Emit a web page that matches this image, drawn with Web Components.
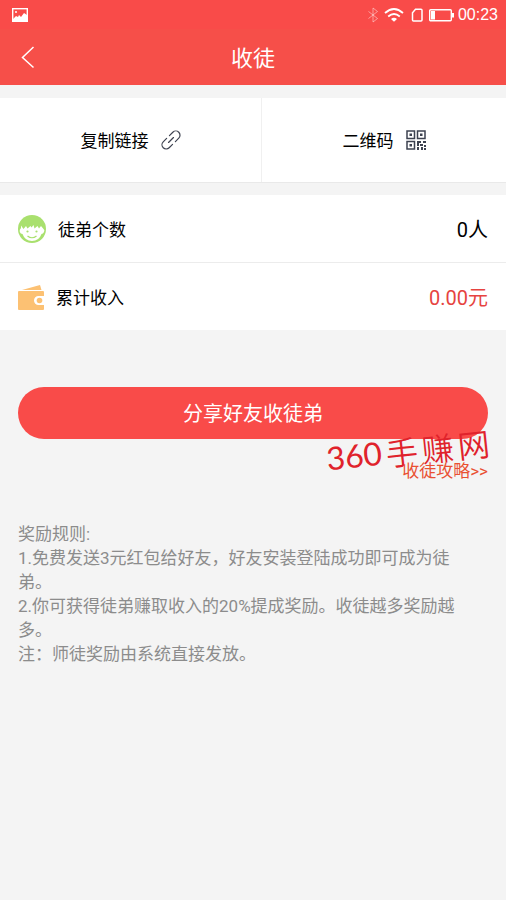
<!DOCTYPE html>
<html lang="zh-CN">
<head>
<meta charset="utf-8">
<meta name="viewport" content="width=device-width, initial-scale=1">
<title>收徒</title>
<style>
html { background: #f4f4f4; }
body { margin: 0; color: #000; font: 17px/24px Roboto, "Noto Sans CJK SC", sans-serif; }
</style>
</head>
<body>
<invite-page></invite-page>
<script>
const define = (name, html) => {
  const template = document.createElement('template');
  template.innerHTML = '<style>*{box-sizing:border-box}:host{display:block;box-sizing:border-box}svg{display:block;flex:none}button{font:inherit;color:inherit;border:0;margin:0;padding:0;background:none;cursor:pointer}</style>' + html;
  customElements.define(name, class extends HTMLElement {
    constructor() {
      super();
      this.attachShadow({ mode: 'open' }).append(template.content.cloneNode(true));
    }
  });
};

define('status-bar', `
<style>
:host { display: flex; align-items: center; justify-content: space-between; height: 29px; padding: 0 8px 0 12px; background: #f94b49; color: #fff; }
.right { display: flex; align-items: center; gap: 4px; }
time { font: 16px/20px "Liberation Sans", sans-serif; }
</style>
<svg width="16" height="14" viewBox="0 0 16 14" aria-hidden="true"><rect x=".7" y=".7" width="14.6" height="12.6" fill="none" stroke="#fff" stroke-width="1.4"/><circle cx="4" cy="4" r="1" fill="#fff"/><path d="M1 13V11L4 8l2 1 1-2 2 2 3-4 3 2v6z" fill="#fff"/></svg>
<div class="right">
<svg width="12" height="16" viewBox="0 0 12 16" fill="none" stroke="#fff" stroke-opacity=".45" aria-hidden="true"><path d="M1.500 4.500l9 7L6 15V1l4.500 3.500-9 7"/></svg>
<svg width="22" height="16" viewBox="0 0 22 16" fill="none" stroke="#fff" stroke-width="1.800" aria-hidden="true"><path d="M2 6q9-8 18 0M5.200 9.500q5.800-5 11.600 0"/><path d="M8 12q3-2.600 6 0l-3 2.800z" fill="#fff" stroke="none"/></svg>
<svg width="16" height="16" viewBox="0 0 16 16" fill="none" stroke="#fff" stroke-width="1.500" aria-hidden="true"><path d="M6.500 2.300H12q1 0 1 1V13q0 1-1 1H4.500q-1 0-1-1V5.800z"/></svg>
<svg width="25" height="14" viewBox="0 0 25 14" aria-hidden="true"><rect x=".7" y="1.700" width="21.600" height="11" rx="1" fill="none" stroke="#fff" stroke-width="1.400"/><path d="M2 3h4v8.400H2zM23 5h2v4.500h-2z" fill="#fff"/></svg>
<time>00:23</time>
</div>`);

define('nav-bar', `
<style>
:host { display: grid; grid-template-columns: 56px 1fr 56px; align-items: center; height: 56px; background: #f64f49; color: #fff; }
button { display: flex; align-items: center; height: 56px; padding-left: 21px; }
h1 { margin: 0; padding-top: 4px; font-size: 22px; line-height: 32px; font-weight: 400; text-align: center; }
</style>
<button type="button" aria-label="返回"><svg width="14" height="24" viewBox="0 0 14 24" fill="none" stroke="#fff" stroke-width="1.500"><path d="M12.500 2L1.500 12.500l11 10"/></svg></button>
<h1><slot></slot></h1>`);

define('action-tile', `
<style>
:host { flex: 1; }
button { display: flex; align-items: center; justify-content: center; gap: 12px; width: 100%; height: 84px; }
span { padding-top: 2px; }
</style>
<button type="button"><span><slot></slot></span><slot name="icon"></slot></button>`);

define('stat-row', `
<style>
:host { display: flex; align-items: center; gap: 12px; height: 67px; padding: 0 18px; background: #fff; }
span { padding-top: 2px; }
.value { margin-left: auto; font-size: 20px; line-height: 28px; color: var(--value-color, #000); }
</style>
<slot name="icon"></slot><span><slot></slot></span><span class="value"><slot name="value"></slot></span>`);

define('share-button', `
<style>
button { display: block; width: 100%; height: 52px; padding-top: 2px; border-radius: 26px; background: #f94b49; color: #fff; font-size: 20px; line-height: 28px; }
</style>
<button type="button"><slot></slot></button>`);

define('site-mark', `
<style>
:host { display: flex; gap: 4px; color: #e0222b; font: 350 32px/40px "Noto Sans CJK SC", sans-serif; transform: rotate(-6deg); pointer-events: none; }
b { font-family: Lato, sans-serif; font-weight: 400; }
</style>
<b>360</b><span>手</span><span>赚</span><span>网</span>`);

define('reward-rules', `
<style>
:host { color: #8c8c8c; }
h2, p { margin: 0; font-size: 17px; line-height: 24px; font-weight: 400; }
</style>
<h2>奖励规则:</h2>
<p>1.免费发送3元红包给好友，好友安装登陆成功即可成为徒弟。</p>
<p>2.你可获得徒弟赚取收入的20%提成奖励。收徒越多奖励越多。</p>
<p>注：师徒奖励由系统直接发放。</p>`);

define('invite-page', `
<style>
.actions { display: flex; margin: 13px 0; background: #fff; box-shadow: 0 1px #e9e9e9; }
.actions action-tile:first-child { flex: 0 0 calc(50% + 9px); border-right: 1px solid #f0f0f0; }
.stats { display: grid; gap: 1px; background: #ececec; }
.income { --value-color: #e64340; }
.share { position: relative; padding: 57px 18px 0; }
.guide { margin-top: 20px; text-align: right; }
a { color: #e95032; text-decoration: none; }
site-mark { position: absolute; right: 16px; bottom: 13px; }
reward-rules { padding: 39px 30px 39px 18px; }
</style>
<status-bar></status-bar>
<nav-bar>收徒</nav-bar>
<main>
<div class="actions">
<action-tile>复制链接<svg slot="icon" width="20" height="20" viewBox="0 0 20 20" fill="none" stroke="#3d4250" stroke-width="1.200" stroke-linecap="round" aria-hidden="true"><g transform="rotate(-45 10 10)"><path d="M8 5.800H3.200a4.200 4.200 0 0 0 0 8.400H8M12 5.800h4.800a4.200 4.200 0 0 1 0 8.400H12M6.500 10h7"/></g></svg></action-tile>
<action-tile>二维码<svg slot="icon" width="20" height="20" viewBox="0 0 20 20" aria-hidden="true"><g fill="none" stroke="#3d4250" stroke-width="1.500"><path d="M1 1h7.500v7.500H1zM11.500 1H19v7.500h-7.500zM1 11.500h7.500V19H1z"/></g><path fill="#3d4250" d="M3.500 3.500H6V6H3.500zM14 3.500h2.500V6H14zM3.500 14H6v2.500H3.500zM11 11h4v2h-2v3h-2zM17 11h3v2h-3zM14 14h3v2h-3zM11 17h2v3h-2zM15 17h2v3h-2zM18 15h2v2h-2zM18 18h2v2h-2z"/></svg></action-tile>
</div>
<div class="stats">
<stat-row><svg slot="icon" width="28" height="28" viewBox="0 0 28 28" aria-hidden="true"><circle cx="14" cy="14" r="14" fill="#a9e06e"/><path d="M3 10.500L5.500 14 8 11l1.500 2.500 3-2.500 1 1.500L15.500 10l1 3.500 3-2.500 1.500 2.500L23 11l2.500 3q1.500 1 .5 3-1 2-2.500 2Q21 26 14 26T4.500 19Q2.500 19 1.800 17T3 13z" fill="#fff"/><g fill="#a9e06e"><circle cx="9.500" cy="16.500" r="1.100"/><circle cx="18.500" cy="16.500" r="1.100"/></g><path d="M9.500 21q4.500 3.500 9 0" fill="none" stroke="#a9e06e" stroke-width="1.200"/></svg>徒弟个数<span slot="value">0人</span></stat-row>
<stat-row class="income"><svg slot="icon" width="26" height="26" viewBox="0 0 26 26" fill="#fcc173" aria-hidden="true"><path d="M4 6L22 1l1.500 5z"/><path d="M1 7h24q1 0 1 1v17q0 1-1 1H1q-1 0-1-1V8q0-1 1-1z"/><path d="M26 12h-5.500a4.500 4.500 0 0 0 0 9H26z" fill="#fff"/><circle cx="21.500" cy="16.500" r="2.800"/></svg>累计收入<span slot="value">0.00元</span></stat-row>
</div>
<div class="share">
<share-button>分享好友收徒弟</share-button>
<div class="guide"><a href="#guide">收徒攻略&gt;&gt;</a></div>
<site-mark></site-mark>
</div>
<reward-rules></reward-rules>
</main>`);
</script>
</body>
</html>
